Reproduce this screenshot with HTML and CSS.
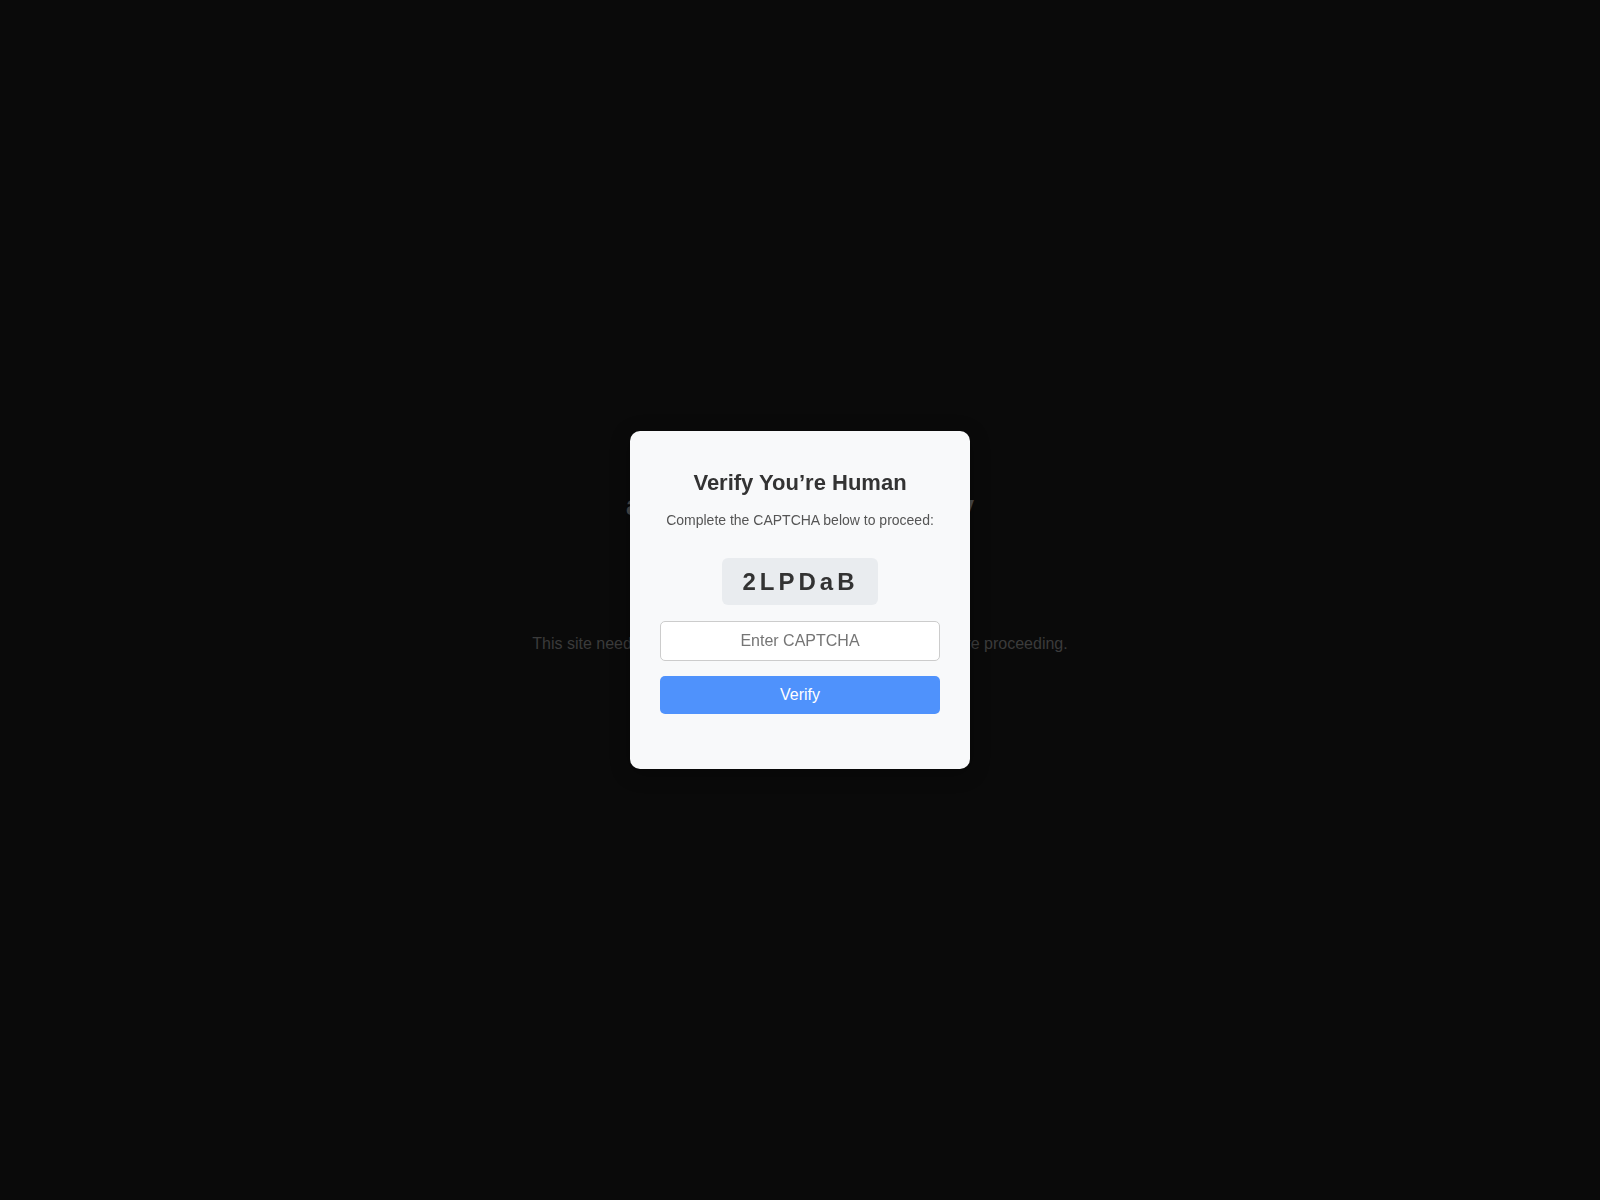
FILE: index.html
```html
<!DOCTYPE html>
<html lang="en">
<head>
<meta charset="utf-8">
<title>Verify You're Human</title>
<link rel="stylesheet" href="styles.css">
</head>
<body>
<main class="page">
  <h1 class="page-title">automated access gateway</h1>
  <p class="page-text">This site needs to review the security of your connection before proceeding.</p>
</main>
<div class="overlay">
  <div class="modal">
    <h2 class="modal-title">Verify You’re Human</h2>
    <p class="modal-sub">Complete the CAPTCHA below to proceed:</p>
    <div class="captcha">2LPDaB</div>
    <input class="captcha-input" type="text" placeholder="Enter CAPTCHA">
    <button class="verify-btn" type="button">Verify</button>
  </div>
</div>
</body>
</html>
```
FILE: styles.css
```css
html, body {
  margin: 0;
  padding: 0;
}
body {
  background: #0a0a0a;
  font-family: "Liberation Sans", Arial, sans-serif;
  min-height: 100vh;
}
.page {
  display: flex;
  flex-direction: column;
  align-items: center;
  padding-top: 490px;
  text-align: center;
}
.page-title {
  margin: 0;
  font-size: 27px;
  line-height: 32px;
  font-weight: bold;
  color: #4a4a4a;
}
.page-text {
  margin: 112px 0 0;
  font-size: 16px;
  line-height: 20px;
  color: #3b3b3b;
}
.overlay {
  position: fixed;
  inset: 0;
  display: flex;
  align-items: center;
  justify-content: center;
}
.modal {
  width: 280px;
  padding: 39px 30px 55px;
  background: #f8f9fa;
  border-radius: 10px;
  box-shadow: 0 4px 20px rgba(0, 0, 0, 0.3);
  display: flex;
  flex-direction: column;
  align-items: center;
  text-align: center;
}
.modal-title {
  margin: 0 0 16px;
  font-size: 22px;
  font-weight: bold;
  color: #333333;
}
.modal-sub {
  margin: 0 0 30px;
  font-size: 14px;
  color: #555555;
}
.captcha {
  padding: 10px 19px 9px 20px;
  background: #e9ecef;
  border-radius: 6px;
  font-size: 24px;
  line-height: 28px;
  font-weight: bold;
  letter-spacing: 4px;
  color: #333333;
  margin-bottom: 16px;
}
.captcha-input {
  box-sizing: border-box;
  width: 280px;
  height: 40px;
  padding: 0 10px;
  border: 1px solid #cccccc;
  border-radius: 5px;
  background: #ffffff;
  font-family: "Liberation Sans", Arial, sans-serif;
  font-size: 16px;
  text-align: center;
  color: #333;
  margin: 0 0 15px;
  outline: none;
}
.captcha-input::placeholder {
  color: #757575;
}
.verify-btn {
  box-sizing: border-box;
  width: 280px;
  height: 38px;
  border: none;
  border-radius: 5px;
  background: #4f92fc;
  color: #ffffff;
  font-family: "Liberation Sans", Arial, sans-serif;
  font-size: 16px;
  cursor: pointer;
}
```
